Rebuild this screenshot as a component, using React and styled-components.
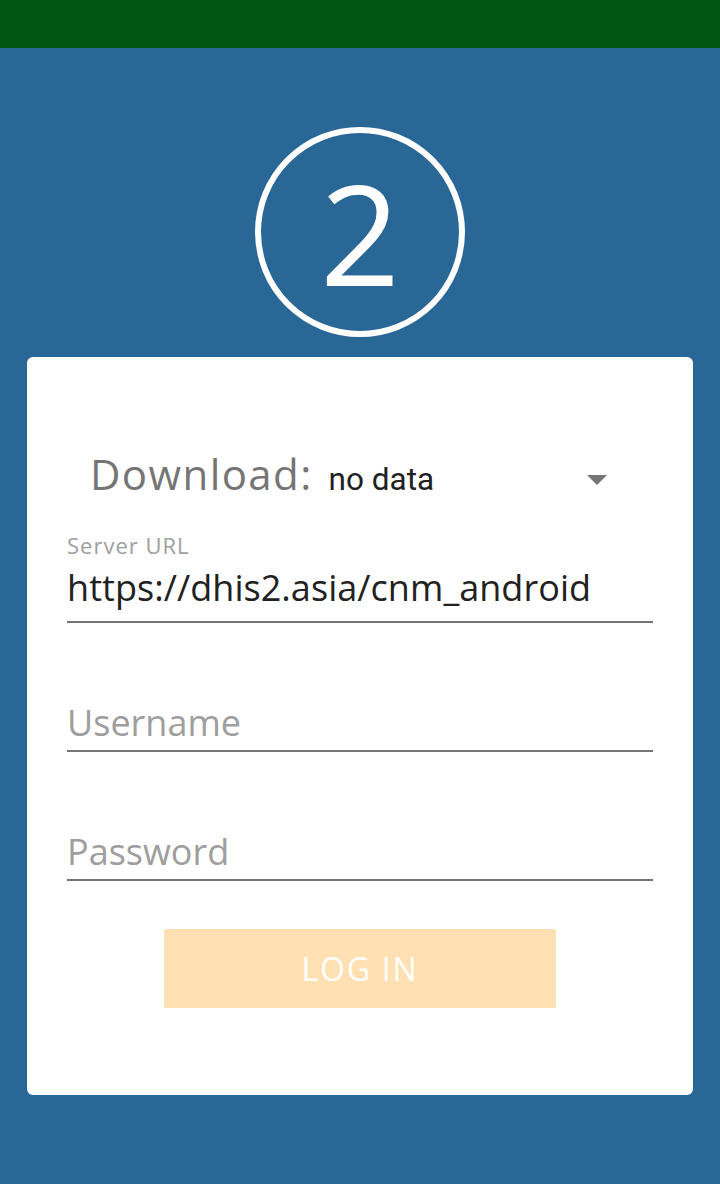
import React from "react";
import styled, { createGlobalStyle } from "styled-components";

const Global = createGlobalStyle`
  html, body { margin: 0; padding: 0; }
  body { background: #286796; font-family: "Open Sans", sans-serif; }
`;

const Screen = styled.div`
  width: 720px;
  height: 1184px;
  background: #286796;
  display: flex;
  flex-direction: column;
  align-items: center;
`;

const TopBar = styled.div`
  width: 100%;
  height: 48px;
  background: #005713;
`;

const Badge = styled.div`
  margin-top: 79px;
  width: 198px;
  height: 198px;
  border: 6px solid #fff;
  border-radius: 50%;
  display: flex;
  align-items: center;
  justify-content: center;
  color: #fff;
  font-family: "Open Sans", sans-serif;
  font-weight: 400;
  font-size: 140px;
  line-height: 1;
`;

const Card = styled.div`
  margin-top: 20px;
  width: 666px;
  height: 738px;
  box-sizing: border-box;
  background: #fff;
  border-radius: 6px;
  padding: 87px 40px 0;
  display: flex;
  flex-direction: column;
`;

const SpinnerRow = styled.div`
  height: 60px;
  display: flex;
  align-items: baseline;
  padding-left: 23px;
  padding-right: 46px;
`;

const SpinnerLabel = styled.span`
  font-family: "Open Sans", sans-serif;
  font-size: 42px;
  line-height: 60px;
  letter-spacing: 1.4px;
  color: #757575;
`;

const SpinnerValue = styled.span`
  font-family: Roboto, sans-serif;
  font-size: 31.5px;
  color: #212121;
  margin-left: 16px;
  flex: 1;
`;

const Caret = styled.div`
  align-self: center;
  width: 0;
  height: 0;
  border-left: 10px solid transparent;
  border-right: 10px solid transparent;
  border-top: 10px solid #757575;
  margin-top: 12px;
`;

const Field = styled.div`
  display: flex;
  flex-direction: column;
  border-bottom: 2px solid #757575;
  margin-top: ${(p) => p.$mt}px;
`;

const FloatLabel = styled.div`
  font-family: "Open Sans", sans-serif;
  font-size: 22px;
  letter-spacing: 1px;
  color: #9e9e9e;
  line-height: 26px;
`;

const Value = styled.div`
  font-family: "Open Sans", sans-serif;
  font-size: 36px;
  letter-spacing: 0.05px;
  color: #212121;
  line-height: 48px;
  margin-top: 6px;
  padding-bottom: 9px;
`;

const Placeholder = styled.div`
  font-family: "Open Sans", sans-serif;
  font-size: 36px;
  color: #9e9e9e;
  line-height: 48px;
  padding-bottom: 3px;
`;

const Button = styled.div`
  align-self: center;
  margin-top: 48px;
  width: 392px;
  height: 79px;
  background: #ffe0b2;
  border-radius: 2px;
  display: flex;
  align-items: center;
  justify-content: center;
  color: #fff;
  font-family: "Open Sans", sans-serif;
  font-size: 32px;
  letter-spacing: 1.8px;
`;

export default function App() {
  return (
    <>
      <Global />
      <Screen>
        <TopBar />
        <Badge>2</Badge>
        <Card>
          <SpinnerRow>
            <SpinnerLabel>Download:</SpinnerLabel>
            <SpinnerValue>no data</SpinnerValue>
            <Caret />
          </SpinnerRow>
          <Field $mt={28}>
            <FloatLabel>Server URL</FloatLabel>
            <Value>https://dhis2.asia/cnm_android</Value>
          </Field>
          <Field $mt={76}>
            <Placeholder>Username</Placeholder>
          </Field>
          <Field $mt={76}>
            <Placeholder>Password</Placeholder>
          </Field>
          <Button>LOG IN</Button>
        </Card>
      </Screen>
    </>
  );
}
